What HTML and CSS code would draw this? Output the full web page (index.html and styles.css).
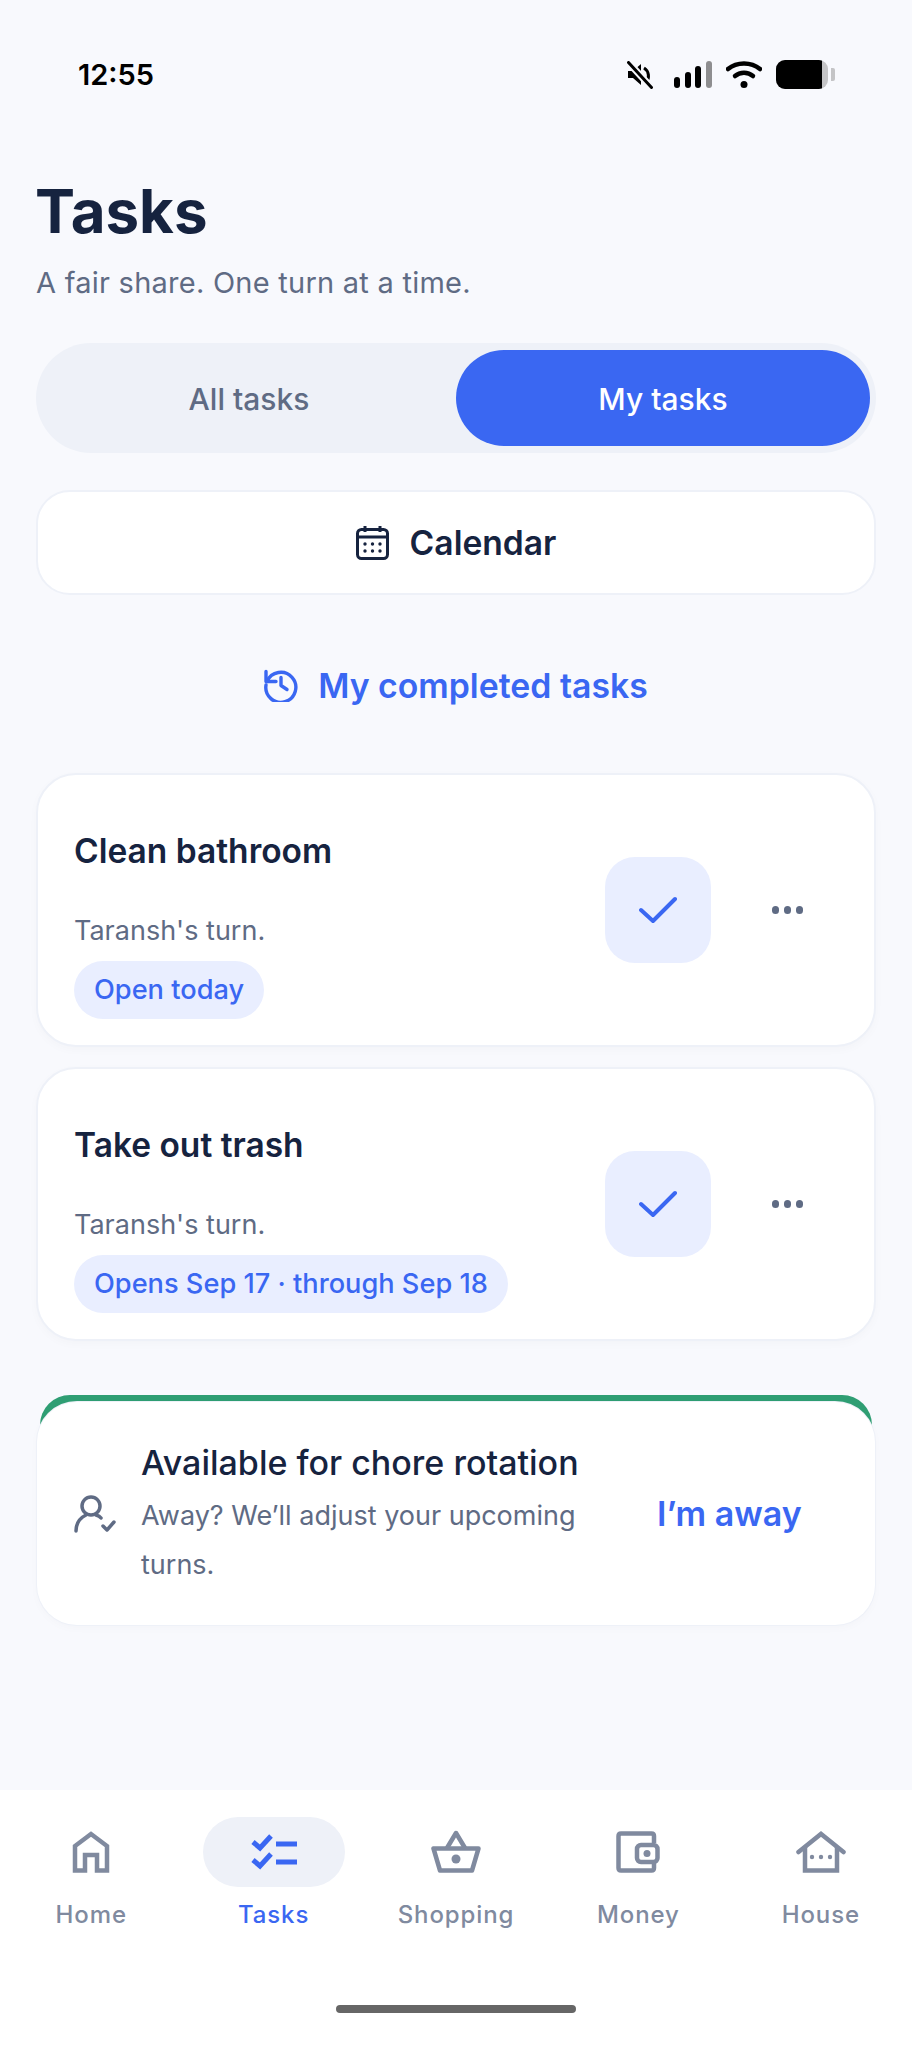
FILE: index.html
```html
<!DOCTYPE html>
<html lang="en">
<head>
    <meta charset="UTF-8">
    <meta name="viewport" content="width=device-width, initial-scale=1.0">
    <title>Tasks</title>
    <link rel="stylesheet" href="styles.css">
</head>
<body>
    <div class="app">
        <div class="status-bar">
            <span class="time">12:55</span>
            <div class="status-icons">
                <svg class="icon-mute" width="26" height="28" viewBox="0 0 26 28">
                    <path d="M1 10h5l8-7v21l-8-7H1z" fill="#000"/>
                    <path d="M17 7c5 3 6 10 2 15" fill="none" stroke="#000" stroke-width="3"/>
                    <path d="M1.500 1.500l23 25" stroke="#f8f9fd" stroke-width="7"/>
                    <path d="M1.500 1.500l23 25" stroke="#000" stroke-width="3" stroke-linecap="round"/>
                </svg>
                <svg class="icon-signal" width="38" height="27" viewBox="0 0 38 27">
                    <rect x="0" y="16" width="6" height="11" rx="3" fill="#000"/>
                    <rect x="11" y="11" width="6" height="16" rx="3" fill="#000"/>
                    <rect x="21" y="5" width="6" height="22" rx="3" fill="#000"/>
                    <rect x="32" y="0" width="6" height="27" rx="3" fill="#8e8e90"/>
                </svg>
                <svg class="icon-wifi" width="36" height="27" viewBox="0 0 36 27">
                    <path d="M2 8c9-7.500 23-7.500 32 0" fill="none" stroke="#000" stroke-width="4.500" stroke-linecap="round"/>
                    <path d="M9 15c5-4.500 13-4.500 18 0" fill="none" stroke="#000" stroke-width="4.500" stroke-linecap="round"/>
                    <circle cx="18" cy="23.500" r="3.500" fill="#000"/>
                </svg>
                <div class="battery">
                    <div class="battery-body"><div class="battery-level"></div></div>
                    <div class="battery-cap"></div>
                </div>
            </div>
        </div>

        <main class="content">
            <h1>Tasks</h1>
            <p class="subtitle">A fair share. One turn at a time.</p>

            <div class="toggle">
                <div class="toggle-item">All tasks</div>
                <div class="toggle-item active">My tasks</div>
            </div>

            <div class="calendar-btn">
                <svg width="33" height="35" viewBox="0 0 33 35" fill="none" stroke="#16233f" stroke-width="3">
                    <rect x="1.500" y="4.500" width="30" height="29" rx="4"/>
                    <path d="M1.500 12h30M9 1v6M24 1v6"/>
                    <g fill="#16233f" stroke="none">
                        <circle cx="9" cy="19" r="1.700"/><circle cx="16.500" cy="19" r="1.700"/><circle cx="24" cy="19" r="1.700"/>
                        <circle cx="9" cy="26" r="1.700"/><circle cx="16.500" cy="26" r="1.700"/><circle cx="24" cy="26" r="1.700"/>
                    </g>
                </svg>
                <span>Calendar</span>
            </div>

            <div class="completed-link">
                <svg width="34" height="34" viewBox="0 0 34 34" fill="none" stroke="#3a67f2" stroke-width="3.400" stroke-linecap="round" stroke-linejoin="round">
                    <path d="M3 13.500A15 15 0 1 1 2 17"/>
                    <path d="M2 3.500v10h10"/>
                    <path d="M17 9.500v8l6 4"/>
                </svg>
                <span>My completed tasks</span>
            </div>

            <div class="task-card">
                <div class="task-info">
                    <h2>Clean bathroom</h2>
                    <p class="turn">Taransh's turn.</p>
                    <span class="pill">Open today</span>
                </div>
                <div class="check-btn">
                    <svg width="38" height="28" viewBox="0 0 38 28" fill="none" stroke="#3a67f2" stroke-width="4" stroke-linecap="round" stroke-linejoin="round"><path d="M2 14l12 11L36 3"/></svg>
                </div>
                <div class="more"><i></i><i></i><i></i></div>
            </div>

            <div class="task-card">
                <div class="task-info">
                    <h2>Take out trash</h2>
                    <p class="turn">Taransh's turn.</p>
                    <span class="pill">Opens Sep 17 · through Sep 18</span>
                </div>
                <div class="check-btn">
                    <svg width="38" height="28" viewBox="0 0 38 28" fill="none" stroke="#3a67f2" stroke-width="4" stroke-linecap="round" stroke-linejoin="round"><path d="M2 14l12 11L36 3"/></svg>
                </div>
                <div class="more"><i></i><i></i><i></i></div>
            </div>

            <div class="avail-card">
                <div class="avail-inner">
                    <svg class="avail-icon" width="42" height="38" viewBox="0 0 42 38" fill="none" stroke="#5f6b84" stroke-width="3.500" stroke-linecap="round" stroke-linejoin="round">
                        <circle cx="17" cy="11" r="9"/>
                        <path d="M2 36c0-8 4-13 10-16M22 20c2 .6 4 1.600 5 3"/>
                        <path d="M29 31l4 4 7-8"/>
                    </svg>
                    <div class="avail-text">
                        <h3>Available for chore rotation</h3>
                        <p>Away? We’ll adjust your upcoming turns.</p>
                    </div>
                    <span class="away-btn">I’m away</span>
                </div>
            </div>
        </main>

        <nav class="tab-bar">
            <div class="tab">
                <div class="tab-icon">
                    <svg width="38" height="42" viewBox="0 0 38 42" fill="none" stroke="#808a9f" stroke-width="4.500">
                        <path d="M3 39.500V15L19 3l16 12v24.500H25V24H13v15.500z"/>
                    </svg>
                </div>
                <span>Home</span>
            </div>
            <div class="tab active">
                <div class="tab-icon">
                    <svg width="46" height="36" viewBox="0 0 46 36" fill="none" stroke="#3a67f2" stroke-width="5">
                        <path d="M2 8l7 6L20 2M2 26l7 6 11-12"/>
                        <path d="M25 10h21M25 28h21"/>
                    </svg>
                </div>
                <span>Tasks</span>
            </div>
            <div class="tab">
                <div class="tab-icon">
                    <svg width="50" height="44" viewBox="0 0 50 44" fill="none" stroke="#808a9f" stroke-width="4.500" stroke-linejoin="round">
                        <path d="M16 18L25 3l9 15"/>
                        <path d="M2.500 18.500h45L41 40.500H9z"/>
                        <circle cx="25" cy="29" r="4.500" fill="#808a9f" stroke="none"/>
                    </svg>
                </div>
                <span>Shopping</span>
            </div>
            <div class="tab">
                <div class="tab-icon">
                    <svg width="44" height="42" viewBox="0 0 44 42" fill="none" stroke="#808a9f" stroke-width="4.500" stroke-linejoin="round">
                        <path d="M38 12V5q0-2.500-2.500-2.500H5Q2.500 2.500 2.500 5v32Q2.500 39.500 5 39.500h30.500q2.500 0 2.500-2.500v-7"/>
                        <rect x="21" y="14" width="20.500" height="17" rx="4" fill="#fff"/>
                        <circle cx="31" cy="22.500" r="3.500" fill="#808a9f" stroke="none"/>
                    </svg>
                </div>
                <span>Money</span>
            </div>
            <div class="tab">
                <div class="tab-icon">
                    <svg width="50" height="42" viewBox="0 0 50 42" fill="none" stroke="#808a9f" stroke-width="4.500" stroke-linecap="round">
                        <path d="M2.500 21L25 3l22.500 18"/>
                        <path d="M9 16v23.500h32V16" stroke-linecap="butt"/>
                        <g fill="#808a9f" stroke="none">
                            <circle cx="16" cy="26" r="2.200"/><circle cx="25" cy="26" r="2.200"/><circle cx="34" cy="26" r="2.200"/>
                        </g>
                    </svg>
                </div>
                <span>House</span>
            </div>
            <div class="home-indicator"></div>
        </nav>
    </div>
</body>
</html>
```

FILE: styles.css
```css
body {
    margin: 0;
    background-color: #f8f9fd;
    font-family: Inter, "Liberation Sans", sans-serif;
}
.app {
    width: 912px;
    height: 2048px;
    display: flex;
    flex-direction: column;
    overflow: hidden;
}

/* Status bar */
.status-bar {
    display: flex;
    justify-content: space-between;
    align-items: center;
    height: 29px;
    padding: 60px 77px 0 78px;
}
.time {
    font-size: 29px;
    font-weight: 600;
    color: #000;
}
.status-icons {
    display: flex;
    align-items: center;
}
.icon-mute {
    margin-right: 21px;
}
.icon-signal {
    margin-right: 14px;
}
.icon-wifi {
    margin-right: 14px;
}
.battery {
    display: flex;
    align-items: center;
    gap: 3px;
}
.battery-body {
    width: 52px;
    height: 29px;
    border-radius: 9px;
    background: #c4c4c6;
    overflow: hidden;
}
.battery-level {
    width: 46px;
    height: 100%;
    background: #000;
}
.battery-cap {
    width: 4px;
    height: 13px;
    border-radius: 0 2px 2px 0;
    background: #c4c4c6;
}

/* Main content */
.content {
    flex: 1;
    padding: 86px 36px 0;
}
h1 {
    margin: 0 0 0 -1px;
    font-size: 60px;
    line-height: 72px;
    font-weight: 700;
    color: #16233f;
}
.subtitle {
    margin: 18px 0 0;
    font-size: 29px;
    line-height: 36px;
    letter-spacing: 0.25px;
    color: #5f6b84;
}
.toggle {
    display: flex;
    margin-top: 42px;
    height: 110px;
    padding: 7px 6px;
    box-sizing: border-box;
    border-radius: 55px;
    background-color: #eef1f8;
}
.toggle-item {
    flex: 1;
    display: flex;
    align-items: center;
    justify-content: center;
    padding-top: 2px;
    border-radius: 48px;
    font-size: 30px;
    font-weight: 500;
    color: #5f6b84;
}
.toggle-item.active {
    background-color: #3a67f2;
    color: #fff;
}
.calendar-btn {
    display: flex;
    align-items: center;
    justify-content: center;
    gap: 21px;
    margin-top: 37px;
    height: 105px;
    box-sizing: border-box;
    border: 2px solid #eef1f8;
    border-radius: 34px;
    background: #fff;
    font-size: 33.600px;
    font-weight: 600;
    color: #16233f;
}
.completed-link {
    display: flex;
    align-items: center;
    justify-content: center;
    gap: 20px;
    margin-top: 66px;
    height: 48px;
    margin-bottom: 64px;
    font-size: 33.800px;
    font-weight: 600;
    color: #3a67f2;
}

/* Task cards */
.task-card {
    display: flex;
    align-items: center;
    height: 274px;
    box-sizing: border-box;
    margin-bottom: 20px;
    padding: 0 36px;
    border: 2px solid #eef1f8;
    border-radius: 40px;
    background: #fff;
    box-shadow: 0 3px 10px rgba(22, 35, 63, 0.025);
}
.task-info {
    flex: 1;
    padding-top: 30px;
}
h2 {
    margin: 0;
    font-size: 33.500px;
    line-height: 40px;
    font-weight: 600;
    color: #16233f;
}
.turn {
    margin: 40px 0 0;
    font-size: 27px;
    line-height: 40px;
    color: #5f6b84;
}
.pill {
    display: inline-block;
    margin-top: 10px;
    padding: 0 20px;
    height: 58px;
    line-height: 58px;
    border-radius: 29px;
    background-color: #e9eeff;
    font-size: 27.200px;
    font-weight: 500;
    color: #3a67f2;
}
.check-btn {
    display: flex;
    align-items: center;
    justify-content: center;
    width: 106px;
    height: 106px;
    border-radius: 30px;
    background-color: #e9eeff;
}
.more {
    display: flex;
    gap: 4.500px;
    margin-left: 61px;
    margin-right: 35px;
}
.more i {
    width: 7.500px;
    height: 7.500px;
    border-radius: 50%;
    background-color: #5f6b84;
}

/* Availability card */
.avail-card {
    position: relative;
    margin: 54px 1px 0;
    padding-top: 7px;
}
.avail-card::before {
    content: "";
    position: absolute;
    top: 0;
    left: 3px;
    right: 3px;
    height: 30px;
    border-radius: 40px 40px 0 0;
    background-color: #2f9e73;
}
.avail-inner {
    position: relative;
    display: flex;
    align-items: center;
    height: 223px;
    box-sizing: border-box;
    padding: 0 37px;
    border-radius: 40px;
    background: #fff;
    box-shadow: 0 0 0 1px #eef1f8, 0 3px 10px rgba(22, 35, 63, 0.025);
}
.avail-icon {
    flex-shrink: 0;
    margin-right: 25px;
}
.avail-text {
    width: 450px;
    padding-top: 5px;
}
h3 {
    margin: 0;
    font-size: 34px;
    line-height: 40px;
    font-weight: 500;
    color: #16233f;
}
.avail-text p {
    margin: 8px 0 0;
    font-size: 27px;
    line-height: 49px;
    color: #5f6b84;
}
.away-btn {
    margin-left: 66px;
    font-size: 34px;
    font-weight: 600;
    color: #3a67f2;
    white-space: nowrap;
}

/* Bottom navigation */
.tab-bar {
    position: relative;
    display: flex;
    height: 258px;
    box-sizing: border-box;
    padding-top: 27px;
    background: #fff;
}
.tab {
    flex: 1;
    display: flex;
    flex-direction: column;
    align-items: center;
    font-size: 24px;
    font-weight: 500;
    letter-spacing: 0.9px;
    color: #808a9f;
}
.tab.active {
    color: #3a67f2;
}
.tab-icon {
    display: flex;
    align-items: center;
    justify-content: center;
    width: 142px;
    height: 70px;
    border-radius: 35px;
}
.tab.active .tab-icon {
    background-color: #eef1f8;
}
.tab span {
    margin-top: 11px;
    line-height: 34px;
}
.home-indicator {
    position: absolute;
    left: 336px;
    bottom: 35px;
    width: 240px;
    height: 8px;
    border-radius: 4px;
    background-color: #666;
}
```
